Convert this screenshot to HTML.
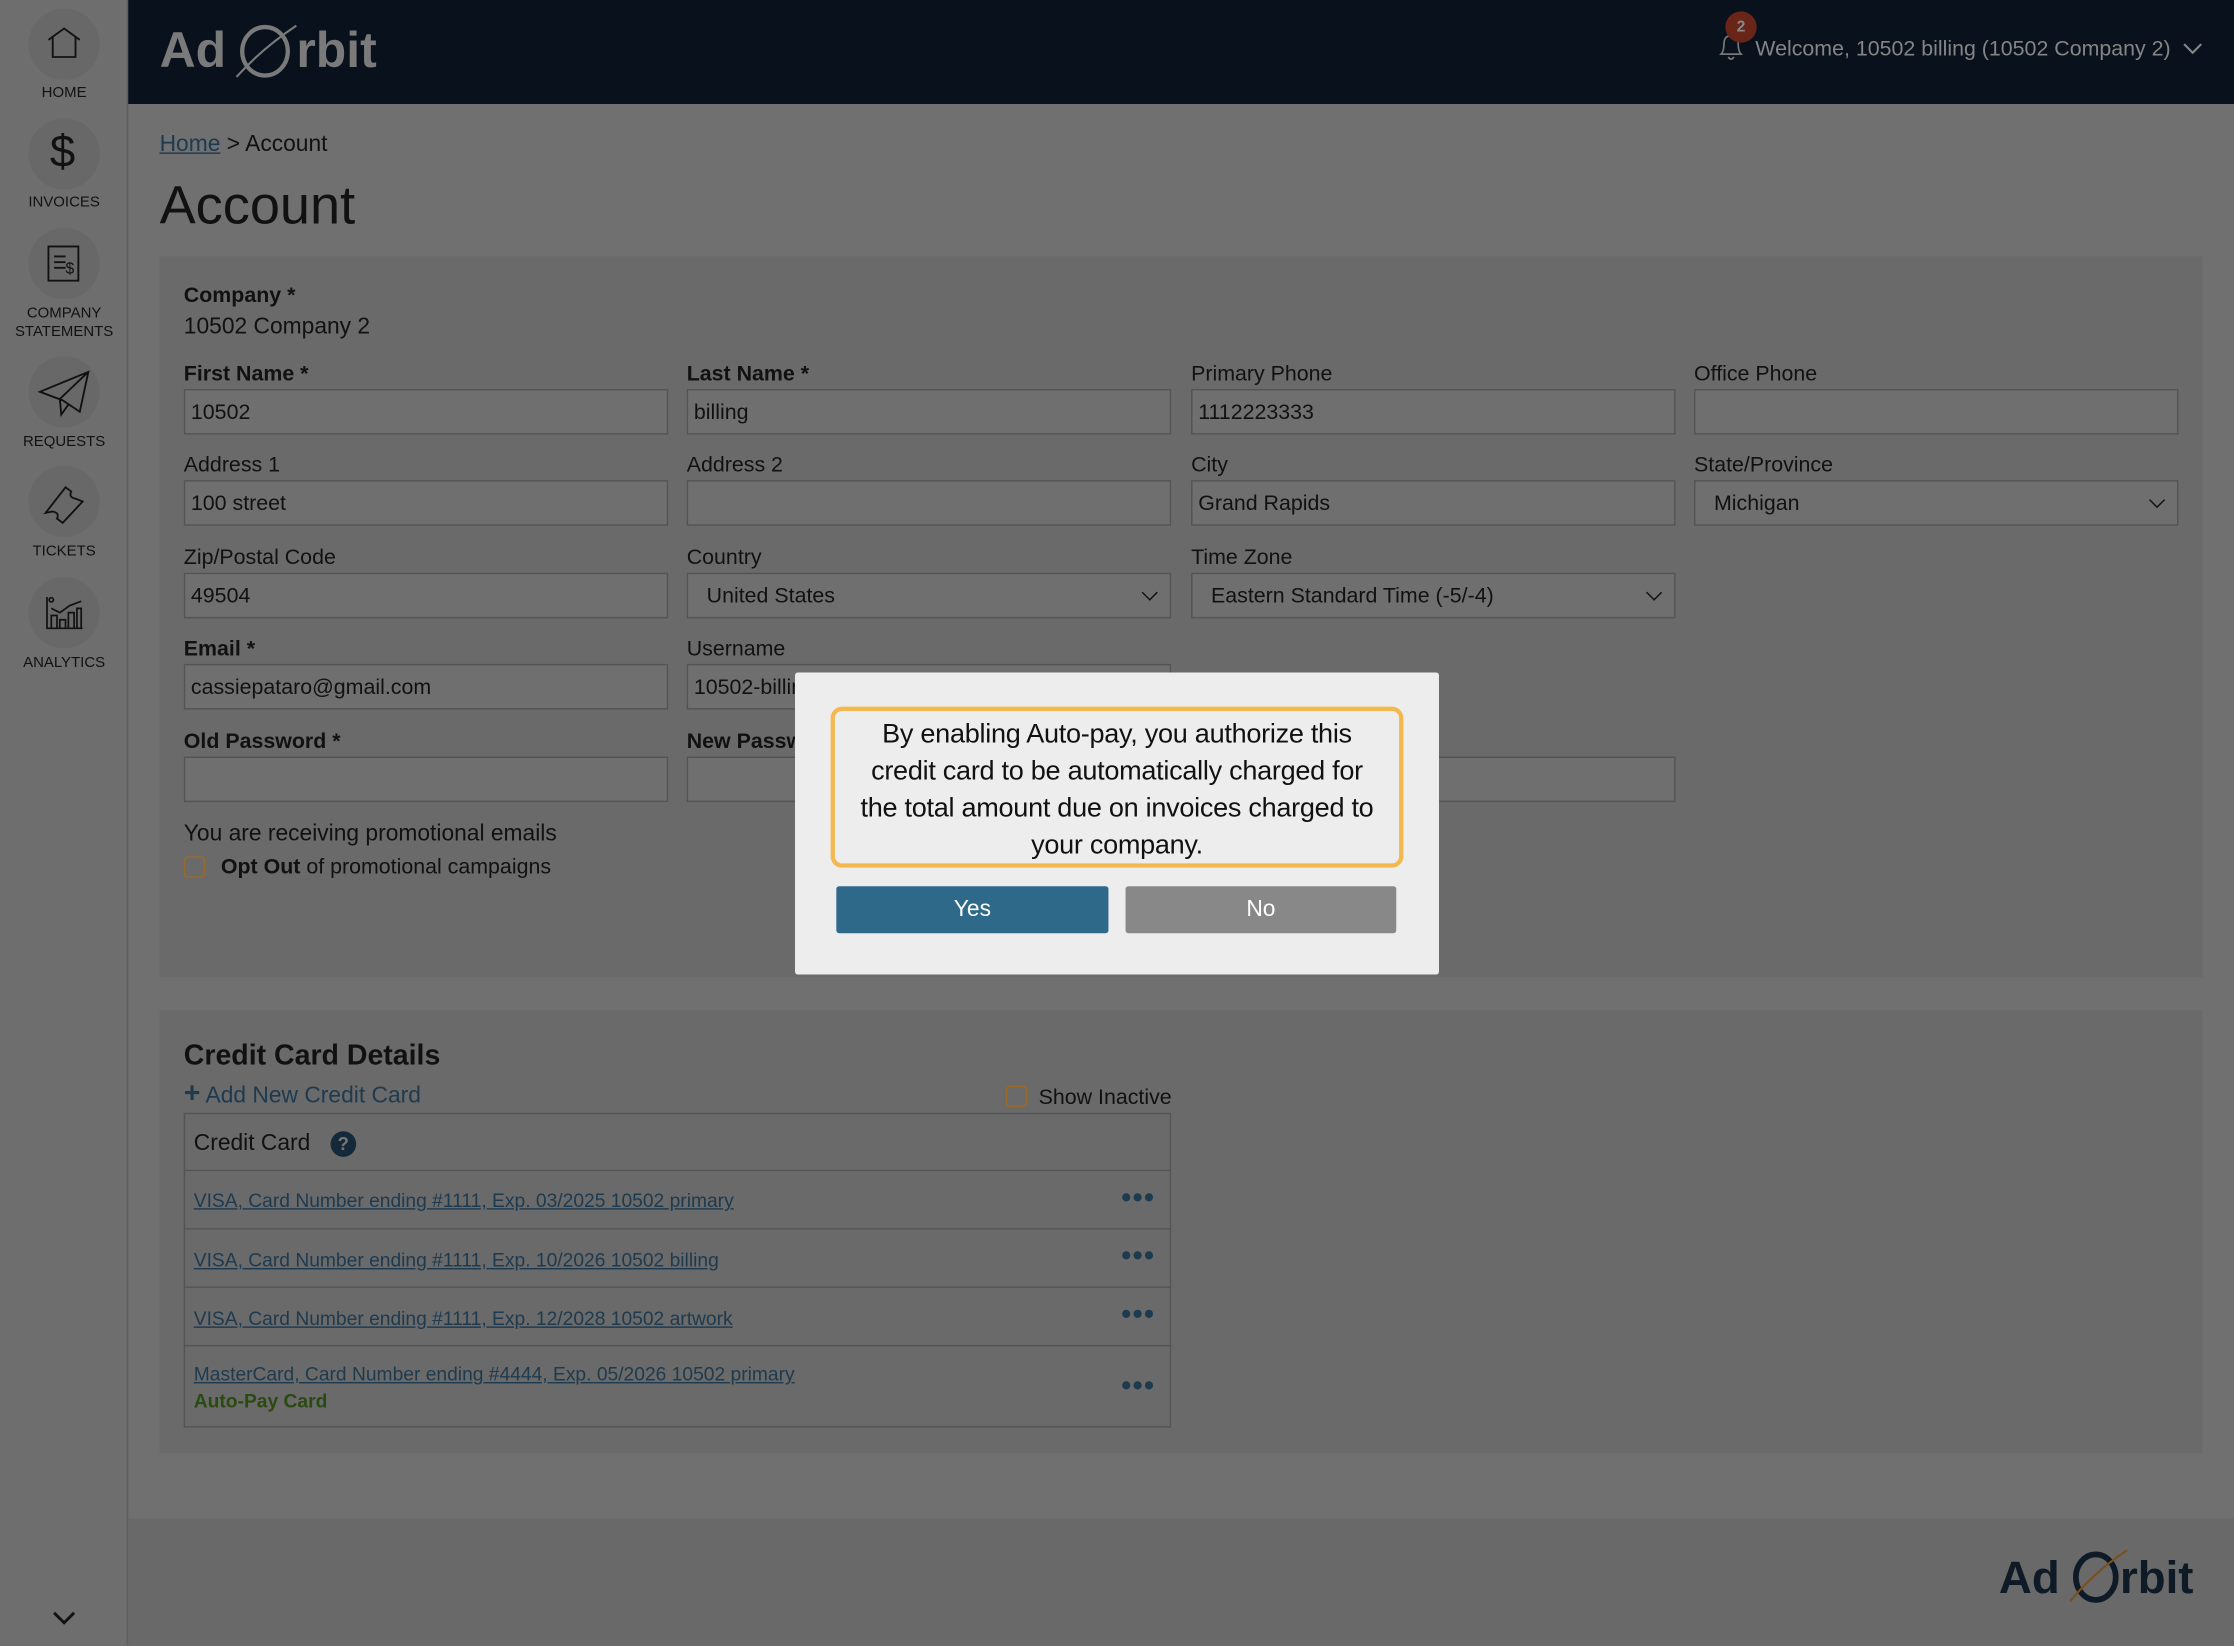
<!DOCTYPE html>
<html><head><meta charset="utf-8"><style>
*{box-sizing:border-box;margin:0;padding:0}
html,body{width:2234px;height:1646px;overflow:hidden;background:#707070}
#w{position:absolute;left:0;top:0;width:1568px;height:1155px;transform:scale(1.42474);transform-origin:0 0;font-family:"Liberation Sans",sans-serif;color:#111;background:#707070}
.a{position:absolute}
.sb{left:0;top:0;width:90px;height:1155px;background:#6e6e6e;border-right:1px solid #5e5e5e}
.ci{position:absolute;left:20px;width:50px;height:50px;border-radius:50%;background:#686868}
.sl{position:absolute;left:0;width:90px;text-align:center;font-size:10.5px;color:#111;line-height:13px}
.hd{left:90px;top:0;width:1478px;height:73px;background:#08111c}
.lbl{position:absolute;font-size:15px;color:#111;margin-top:2px}
.b{font-weight:bold}
.in{position:absolute;width:340px;height:32px;border:1px solid #545454;background:#6f6f6f;font-size:15px;padding:7px 4px 5px;color:#111}
.sel{padding-left:13px}
.sel:after{content:"";position:absolute;right:10px;top:9px;width:7px;height:7px;border-right:1.5px solid #111;border-bottom:1.5px solid #111;transform:rotate(45deg)}
.row{position:absolute;left:129px;width:693px;border:1px solid #555;border-top:none;font-size:13.5px}
.row a{color:#1d3a4f;text-decoration:underline;position:absolute;left:6px}
.dots{position:absolute;right:10px;color:#1d3a4f;font-size:20px;font-weight:bold;letter-spacing:1px}
.cb{position:absolute;width:15px;height:15px;border:1.5px solid #9a6a2a;border-radius:3px}
</style></head><body><div id="w">
<div class="a sb">
 <div class="ci" style="top:6px"></div>
 <svg class="a" style="left:32px;top:17px" width="26" height="26" viewBox="0 0 26 26" fill="none" stroke="#111" stroke-width="1.3"><path d="M2 11 L13 3 L24 11 M5 9 V23 H21 V9"/></svg>
 <div class="sl" style="top:59px">HOME</div>
 <div class="ci" style="top:83px"></div>
 <div class="a" style="left:35px;top:88px;font-size:32px;color:#111;font-weight:300">$</div>
 <div class="sl" style="top:136px">INVOICES</div>
 <div class="ci" style="top:160px"></div>
 <svg class="a" style="left:33px;top:172px" width="24" height="26" viewBox="0 0 24 26" fill="none" stroke="#111" stroke-width="1.3"><rect x="1" y="1" width="21" height="24"/><path d="M5 8h8M5 12h8M5 16h8"/><text x="13" y="20" font-size="11" fill="#111" stroke="none">$</text></svg>
 <div class="sl" style="top:214px">COMPANY<br>STATEMENTS</div>
 <div class="ci" style="top:250px"></div>
 <svg class="a" style="left:26px;top:259px" width="38" height="34" viewBox="0 0 38 34" fill="none" stroke="#111" stroke-width="1.3"><path d="M2 16 L36 2 L30 30 L18 22 Z M36 2 L16 21 L17 32 L22 25"/></svg>
 <div class="sl" style="top:304px">REQUESTS</div>
 <div class="ci" style="top:327px"></div>
 <svg class="a" style="left:30px;top:338px" width="32" height="32" viewBox="0 0 32 32" fill="none" stroke="#111" stroke-width="1.3"><path d="M2 22 L16 4 L20 7 Q18 11 23 12 L28 14 L14 29 L10 26 Q12 22 7 21 Z"/></svg>
 <div class="sl" style="top:381px">TICKETS</div>
 <div class="ci" style="top:405px"></div>
 <svg class="a" style="left:31px;top:417px" width="28" height="26" viewBox="0 0 28 26" fill="none" stroke="#111" stroke-width="1.2"><path d="M2 2V24H27M5 24V15h4v9M11 24V18h4v6M17 24V13h4v11M23 24V10h3v14M5 10 L11 13 L18 8 L26 5"/><circle cx="5" cy="4" r="1.5"/></svg>
 <div class="sl" style="top:459px">ANALYTICS</div>
 <svg class="a" style="left:37px;top:1131px" width="16" height="10" viewBox="0 0 16 10" fill="none" stroke="#111" stroke-width="2"><path d="M1 1 L8 8 L15 1"/></svg>
</div>
<div class="a hd">
 <div class="a" style="left:22px;top:16px;font-size:35px;color:#7a7a7a;font-weight:bold">Ad</div>
 <svg class="a" style="left:74px;top:14px" width="48" height="44" viewBox="0 0 48 44" fill="none" stroke="#7a7a7a" stroke-width="3"><ellipse cx="22" cy="22" rx="16" ry="17"/><path d="M2 40 Q20 20 44 4" stroke-width="1.5"/></svg>
 <div class="a" style="left:118px;top:16px;font-size:35px;color:#7a7a7a;font-weight:bold">rbit</div>
 <svg class="a" style="left:1115px;top:22px" width="20" height="22" viewBox="0 0 20 22" fill="none" stroke="#777" stroke-width="1.2"><path d="M3 16 Q5 14 5 9 Q5 3 10 3 Q15 3 15 9 Q15 14 17 16 Z M8 18 Q10 21 12 18"/></svg>
 <div class="a" style="left:1121px;top:8px;width:22px;height:22px;border-radius:50%;background:#6a2519;color:#888;font-size:11px;text-align:center;line-height:22px;font-weight:bold">2</div>
 <div class="a" style="left:1142px;top:26px;font-size:15px;color:#858585">Welcome, 10502 billing (10502 Company 2)</div>
 <svg class="a" style="left:1442px;top:30px" width="14" height="9" viewBox="0 0 14 9" fill="none" stroke="#858585" stroke-width="1.5"><path d="M1 1 L7 7 L13 1"/></svg>
</div>
<div class="a" style="left:112px;top:93px;font-size:16px"><span style="color:#1d3a4f;text-decoration:underline">Home</span> &gt; Account</div>
<div class="a" style="left:112px;top:124px;font-size:38px">Account</div>
<div class="a" style="left:112px;top:180px;width:1434px;height:506px;background:#6a6a6a"></div>
<div class="lbl b" style="left:129px;top:197px">Company *</div>
<div class="lbl" style="left:129px;top:219px;font-size:16px">10502 Company 2</div>
<div class="lbl b" style="left:129px;top:252px">First Name *</div><div class="in" style="left:129px;top:273px">10502</div>
<div class="lbl b" style="left:482px;top:252px">Last Name *</div><div class="in" style="left:482px;top:273px">billing</div>
<div class="lbl" style="left:836px;top:252px">Primary Phone</div><div class="in" style="left:836px;top:273px">1112223333</div>
<div class="lbl" style="left:1189px;top:252px">Office Phone</div><div class="in" style="left:1189px;top:273px"></div>
<div class="lbl" style="left:129px;top:316px">Address 1</div><div class="in" style="left:129px;top:337px">100 street</div>
<div class="lbl" style="left:482px;top:316px">Address 2</div><div class="in" style="left:482px;top:337px"></div>
<div class="lbl" style="left:836px;top:316px">City</div><div class="in" style="left:836px;top:337px">Grand Rapids</div>
<div class="lbl" style="left:1189px;top:316px">State/Province</div><div class="in sel" style="left:1189px;top:337px">Michigan</div>
<div class="lbl" style="left:129px;top:381px">Zip/Postal Code</div><div class="in" style="left:129px;top:402px">49504</div>
<div class="lbl" style="left:482px;top:381px">Country</div><div class="in sel" style="left:482px;top:402px">United States</div>
<div class="lbl" style="left:836px;top:381px">Time Zone</div><div class="in sel" style="left:836px;top:402px">Eastern Standard Time (-5/-4)</div>
<div class="lbl b" style="left:129px;top:445px">Email *</div><div class="in" style="left:129px;top:466px">cassiepataro@gmail.com</div>
<div class="lbl" style="left:482px;top:445px">Username</div><div class="in" style="left:482px;top:466px">10502-billing</div>
<div class="lbl b" style="left:129px;top:510px">Old Password *</div><div class="in" style="left:129px;top:531px"></div>
<div class="lbl b" style="left:482px;top:510px">New Password</div><div class="in" style="left:482px;top:531px"></div>
<div class="in" style="left:836px;top:531px"></div>
<div class="lbl" style="left:129px;top:575px;font-size:16px">You are receiving promotional emails</div>
<div class="cb" style="left:129px;top:601px"></div>
<div class="lbl" style="left:155px;top:598px"><b>Opt Out</b> of promotional campaigns</div>
<div class="a" style="left:112px;top:709px;width:1434px;height:311px;background:#6a6a6a"></div>
<div class="lbl b" style="left:129px;top:728px;font-size:20px">Credit Card Details</div>
<div class="lbl" style="left:129px;top:759px;font-size:16px;color:#1d3a4f"><b style="font-size:20px;line-height:14px">+</b> Add New Credit Card</div>
<div class="cb" style="left:706px;top:762px"></div>
<div class="lbl" style="left:729px;top:760px">Show Inactive</div>
<div class="row" style="top:781px;height:41px;border-top:1px solid #555"><span style="position:absolute;left:6px;top:12px;font-size:16px">Credit Card</span><span style="position:absolute;left:102px;top:12px;width:18px;height:18px;border-radius:50%;background:#142a3a;color:#777;font-size:13px;text-align:center;line-height:18px;font-weight:bold">?</span></div>
<div class="row" style="top:822px;height:41px"><a style="top:13px">VISA, Card Number ending #1111, Exp. 03/2025 10502 primary</a><span class="dots" style="top:8px">•••</span></div>
<div class="row" style="top:863px;height:41px"><a style="top:14px">VISA, Card Number ending #1111, Exp. 10/2026 10502 billing</a><span class="dots" style="top:8px">•••</span></div>
<div class="row" style="top:904px;height:41px"><a style="top:14px">VISA, Card Number ending #1111, Exp. 12/2028 10502 artwork</a><span class="dots" style="top:8px">•••</span></div>
<div class="row" style="top:945px;height:57px"><a style="top:12px">MasterCard, Card Number ending #4444, Exp. 05/2026 10502 primary</a><span style="position:absolute;left:6px;top:31px;color:#2b4a12;font-weight:bold">Auto-Pay Card</span><span class="dots" style="top:17px">•••</span></div>
<div class="a" style="left:90px;top:1066px;width:1478px;height:89px;background:#696969"></div>
<div class="a" style="left:1403px;top:1089px;font-size:32px;color:#0e1a26;font-weight:bold">Ad</div>
<svg class="a" style="left:1449px;top:1086px" width="46" height="42" viewBox="0 0 46 42" fill="none"><ellipse cx="22" cy="21" rx="14" ry="16" stroke="#0e1a26" stroke-width="4"/><path d="M4 38 Q20 18 44 2" stroke="#7a5020" stroke-width="1.5"/></svg>
<div class="a" style="left:1488px;top:1089px;font-size:32px;color:#0e1a26;font-weight:bold">rbit</div>
<div class="a" style="left:558px;top:472px;width:452px;height:212px;background:#ededed;border-radius:2px"></div>
<div class="a" style="left:583px;top:496px;width:402px;height:113px;border:3px solid #f4b94e;border-radius:8px;text-align:center;font-size:19px;line-height:26px;padding-top:4px;color:#111;letter-spacing:-0.2px;white-space:nowrap">By enabling Auto-pay, you authorize this<br>credit card to be automatically charged for<br>the total amount due on invoices charged to<br>your company.</div>
<div class="a" style="left:587px;top:622px;width:191px;height:33px;background:#2e6989;border-radius:2px;color:#fff;text-align:center;line-height:33px;font-size:16px">Yes</div>
<div class="a" style="left:790px;top:622px;width:190px;height:33px;background:#888;border-radius:2px;color:#fff;text-align:center;line-height:33px;font-size:16px">No</div>
</div></body></html>
